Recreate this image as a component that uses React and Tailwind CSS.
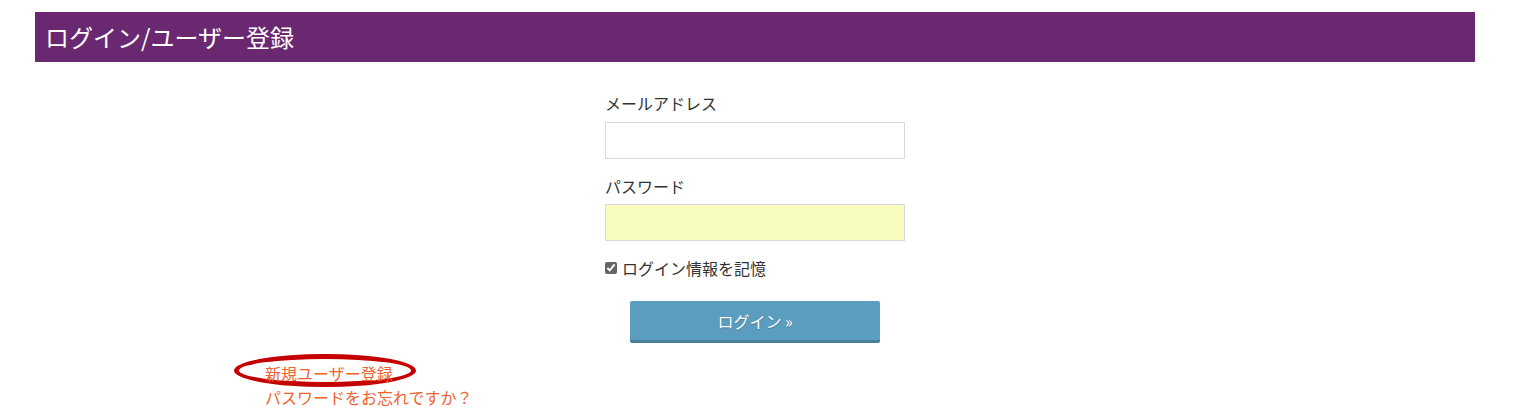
import React from 'react';

const App = () => {
  return (
    <div
      className="min-h-[418px] bg-white pt-[12px]"
      style={{ fontFamily: '"Noto Sans CJK JP", "Noto Sans", sans-serif' }}
    >
      <div className="ml-[35px] w-[1440px]">
        <div className="h-[50px] bg-[#6a2870] flex items-center pl-[10px]">
          <h1 className="text-[24px] leading-none text-white">ログイン/ユーザー登録</h1>
        </div>

        <form className="w-[300px] mx-auto mt-[29px]" onSubmit={(e) => e.preventDefault()}>
          <label className="block text-[16px] leading-[24px] text-[#333]">メールアドレス</label>
          <input
            type="text"
            className="block mt-[7px] w-[300px] h-[37px] border border-[#d9d9d9] bg-white outline-none"
          />
          <label className="block mt-[15px] text-[16px] leading-[24px] text-[#333]">パスワード</label>
          <input
            type="password"
            className="block mt-[6px] w-[300px] h-[37px] border border-[#d9d9d9] bg-[#f8fcbf] outline-none"
          />
          <label className="mt-[15px] flex items-center h-[24px] text-[16px] text-[#333]">
            <input type="checkbox" defaultChecked className="w-[12px] h-[12px] mr-[5px] accent-[#666]" />
            ログイン情報を記憶
          </label>
          <div className="mt-[21px] flex justify-center">
            <button
              type="submit"
              className="w-[250px] h-[42px] bg-[#5b9dbe] border-b-[3px] border-[#4a7f9c] rounded-[2px] text-white text-[16px] [text-shadow:0_1px_1px_rgba(0,0,0,0.25)]"
            >
              ログイン »
            </button>
          </div>
        </form>

        <div className="ml-[230px] mt-[18px] text-[16px] leading-[24px] text-[#ee6230]">
          <div className="relative w-fit">
            <span
              className="absolute left-[-31px] top-[-7px] w-[182px] h-[33px] rounded-[50%] border-[5px] border-[#c40000]"
            />
            <a href="#" className="relative">新規ユーザー登録</a>
          </div>
          <div>
            <a href="#">パスワードをお忘れですか？</a>
          </div>
        </div>
      </div>
    </div>
  );
};

export default App;
